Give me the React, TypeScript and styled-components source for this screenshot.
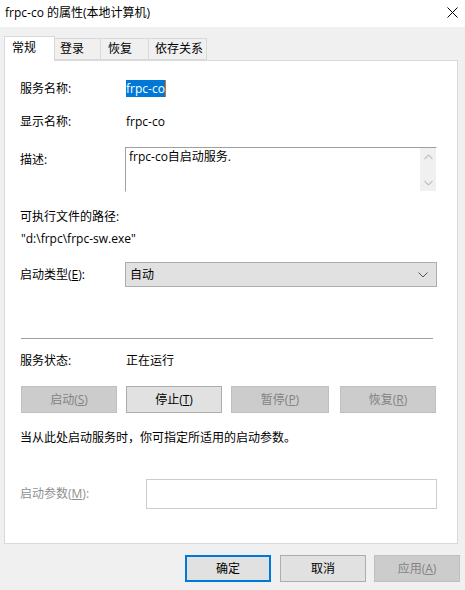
import React from "react";
import styled, { createGlobalStyle } from "styled-components";

const Global = createGlobalStyle`
  html, body { margin: 0; padding: 0; }
  body {
    background: #f0f0f0;
    font-family: "Open Sans", "Noto Sans CJK SC", sans-serif;
    font-size: 12px;
    color: #000;
  }
  * { box-sizing: border-box; }
`;

const Window = styled.div`
  width: 465px;
  height: 590px;
  background: #f0f0f0;
  display: flex;
  flex-direction: column;
  font-family: "Open Sans", "Noto Sans CJK SC", sans-serif;
  font-size: 12px;
  line-height: 16px;
`;

const TitleBar = styled.div`
  height: 27px;
  background: #ffffff;
  display: flex;
  align-items: center;
  justify-content: space-between;
  padding: 0 7px 2px 5px;
  font-size: 12px;
`;

const Body = styled.div`
  padding: 9px 5px 0 4px;
  display: flex;
  flex-direction: column;
`;

const TabRow = styled.div`
  display: flex;
  align-items: flex-end;
  height: 24px;
  position: relative;
  z-index: 1;
`;

const Tab = styled.div<{ $active?: boolean; $w: number; $pl: number }>`
  width: ${(p) => p.$w}px;
  height: ${(p) => (p.$active ? 25 : 22)}px;
  margin-bottom: ${(p) => (p.$active ? -1 : 0)}px;
  background: ${(p) => (p.$active ? "#ffffff" : "#f0f0f0")};
  border: 1px solid #d9d9d9;
  border-bottom: ${(p) => (p.$active ? "none" : "1px solid #d9d9d9")};
  ${(p) => (!p.$active ? "border-left: none;" : "")}
  padding-left: ${(p) => p.$pl}px;
  padding-top: ${(p) => (p.$active ? 3 : 2)}px;
  white-space: nowrap;
`;

const Panel = styled.div`
  width: 454px;
  height: 484px;
  background: #ffffff;
  border: 1px solid #d9d9d9;
  padding: 0 0 0 15px;
  display: flex;
  flex-direction: column;
`;

const Row = styled.div<{ $mt: number; $h?: number; $top?: boolean }>`
  display: flex;
  align-items: ${(p) => (p.$top ? "flex-start" : "center")};
  margin-top: ${(p) => p.$mt}px;
  height: ${(p) => p.$h ?? 16}px;
`;

const Label = styled.div<{ $w?: number; $disabled?: boolean; $mt?: number }>`
  width: ${(p) => p.$w ?? 105}px;
  flex: none;
  color: ${(p) => (p.$disabled ? "#8f8f8f" : "#000")};
  margin-top: ${(p) => p.$mt ?? 0}px;
  white-space: nowrap;
`;

const Value = styled.div`
  white-space: nowrap;
  padding-left: 1px;
`;

const Selected = styled.span`
  background: #0078d7;
  color: #ffffff;
  border-right: 1px solid #e07010;
`;

const TextArea = styled.div`
  width: 312px;
  height: 45px;
  border: 1px solid;
  border-color: #a0a0a0 #ffffff #ffffff #a0a0a0;
  display: flex;
  justify-content: space-between;
  padding: 1px 0 0 3px;
`;

const ScrollBar = styled.div`
  width: 16px;
  height: 43px;
  margin-top: -1px;
  background: #f0f0f0;
  display: flex;
  flex-direction: column;
  justify-content: space-between;
  align-items: center;
  padding: 6px 0 5px;
`;

const Select = styled.div`
  width: 312px;
  height: 25px;
  background: #e1e1e1;
  border: 1px solid #adadad;
  display: flex;
  align-items: center;
  justify-content: space-between;
  padding: 0 8px 0 4px;
`;

const Separator = styled.div`
  width: 412px;
  height: 1px;
  background: #a0a0a0;
  margin-top: 51px;
  margin-left: 1px;
`;

const ButtonRow = styled.div`
  display: flex;
  margin-top: 17px;
  margin-left: 1px;
  height: 27px;
`;

const Button = styled.div<{ $w: number; $ml?: number; $disabled?: boolean; $default?: boolean }>`
  width: ${(p) => p.$w}px;
  height: 27px;
  margin-left: ${(p) => p.$ml ?? 0}px;
  background: ${(p) => (p.$disabled ? "#cccccc" : "#e1e1e1")};
  border: ${(p) => (p.$default ? "2px solid #0078d7" : p.$disabled ? "1px solid #bfbfbf" : "1px solid #adadad")};
  color: ${(p) => (p.$disabled ? "#838383" : "#000")};
  display: flex;
  align-items: center;
  justify-content: center;
  white-space: nowrap;
  flex: none;
`;

const Hint = styled.div`
  margin-top: 17px;
  height: 16px;
  white-space: nowrap;
`;

const Input = styled.div`
  width: 291px;
  height: 30px;
  border: 1px solid #cccccc;
  background: #ffffff;
`;

const Footer = styled.div`
  display: flex;
  justify-content: flex-end;
  margin-top: 11px;
`;

const Chevron = ({ up }: { up?: boolean }) => (
  <svg width="9" height="6" viewBox="0 0 9 6">
    <path
      d={up ? "M0.5 5 L4.5 1 L8.5 5" : "M0.5 1 L4.5 5 L8.5 1"}
      fill="none"
      stroke="#c2c2c2"
      strokeWidth="1.2"
    />
  </svg>
);

export default function App() {
  return (
    <Window>
      <Global />
      <TitleBar>
        <span>frpc-co 的属性(本地计算机)</span>
        <svg width="11" height="11" viewBox="0 0 11 11">
          <path d="M0.5 0.5 L10.5 10.5 M10.5 0.5 L0.5 10.5" stroke="#000" strokeWidth="1" fill="none" />
        </svg>
      </TitleBar>
      <Body>
        <TabRow>
          <Tab $active $w={51} $pl={7}>常规</Tab>
          <Tab $w={46} $pl={5}>登录</Tab>
          <Tab $w={48} $pl={7}>恢复</Tab>
          <Tab $w={58} $pl={6}>依存关系</Tab>
        </TabRow>
        <Panel>
          <Row $mt={20}>
            <Label>服务名称:</Label>
            <Value><Selected>frpc-co</Selected></Value>
          </Row>
          <Row $mt={17}>
            <Label>显示名称:</Label>
            <Value>frpc-co</Value>
          </Row>
          <Row $mt={17} $h={45} $top>
            <Label $mt={5}>描述:</Label>
            <TextArea>
              <span>frpc-co自启动服务.</span>
              <ScrollBar>
                <Chevron up />
                <Chevron />
              </ScrollBar>
            </TextArea>
          </Row>
          <Row $mt={17}>
            <Label $w={200}>可执行文件的路径:</Label>
          </Row>
          <Row $mt={6}>
            <Value>"d:\frpc\frpc-sw.exe"</Value>
          </Row>
          <Row $mt={15} $h={25}>
            <Label>启动类型(<u>E</u>):</Label>
            <Select>
              <span>自动</span>
              <svg width="10" height="6" viewBox="0 0 10 6">
                <path d="M0.5 0.5 L5 5 L9.5 0.5" fill="none" stroke="#555" strokeWidth="1" />
              </svg>
            </Select>
          </Row>
          <Separator />
          <Row $mt={14}>
            <Label>服务状态:</Label>
            <Value>正在运行</Value>
          </Row>
          <ButtonRow>
            <Button $w={96} $disabled>启动(<u>S</u>)</Button>
            <Button $w={96} $ml={9}>停止(<u>T</u>)</Button>
            <Button $w={98} $ml={9} $disabled>暂停(<u>P</u>)</Button>
            <Button $w={96} $ml={11} $disabled>恢复(<u>R</u>)</Button>
          </ButtonRow>
          <Hint>当从此处启动服务时，你可指定所适用的启动参数。</Hint>
          <Row $mt={33} $h={30}>
            <Label $w={126} $disabled>启动参数(<u>M</u>):</Label>
            <Input />
          </Row>
        </Panel>
        <Footer>
          <Button $w={86} $default>确定</Button>
          <Button $w={86} $ml={9}>取消</Button>
          <Button $w={86} $ml={8} $disabled>应用(<u>A</u>)</Button>
        </Footer>
      </Body>
    </Window>
  );
}
